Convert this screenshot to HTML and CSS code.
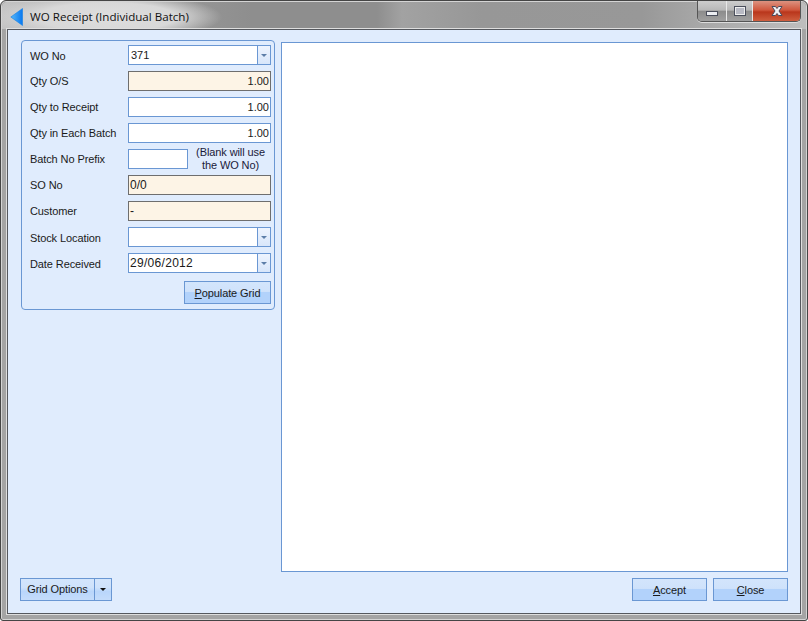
FILE: index.html
```html
<!DOCTYPE html>
<html lang="en">
<head>
<meta charset="utf-8">
<title>WO Receipt (Individual Batch)</title>
<link rel="stylesheet" href="styles.css">
</head>
<body>
<div class="window">
  <header class="titlebar">
    <svg class="app-icon" width="14" height="18" viewBox="0 0 14 18"><defs><linearGradient id="ai" x1="0" y1="0" x2="1" y2="0"><stop offset="0" stop-color="#58b8f8"/><stop offset="1" stop-color="#0878f0"/></linearGradient></defs><path d="M12.5 .5V17.5L.8 9Z" fill="url(#ai)" stroke="#1080e8" stroke-width=".6"/></svg>
    <span class="title">WO Receipt (Individual Batch)</span>
    <div class="controls">
      <div class="ctl ctl-min"><span class="min-glyph"></span></div>
      <div class="ctl ctl-max"><span class="max-glyph"></span></div>
      <div class="ctl ctl-close"><svg width="18" height="12" viewBox="0 0 18 12"><path d="M4 1.5H7.5L9 3.5L10.5 1.5H14L11 6L14 10.5H10.5L9 8.5L7.5 10.5H4L7 6Z" fill="#f0f0f4" stroke="#4a4a5a" stroke-width="1"/></svg></div>
    </div>
  </header>
  <main class="client">
    <div class="body">
      <section class="panel">
        <div class="row row-combo"><label class="lbl">WO No</label><div class="combo"><span class="combo-text num-text">371</span><span class="combo-btn"><i class="caret"></i></span></div></div>
        <div class="row"><label class="lbl">Qty O/S</label><div class="field ro num">1.00</div></div>
        <div class="row"><label class="lbl">Qty to Receipt</label><div class="field num">1.00</div></div>
        <div class="row"><label class="lbl">Qty in Each Batch</label><div class="field num">1.00</div></div>
        <div class="row"><label class="lbl">Batch No Prefix</label><div class="field short"></div><div class="hint">(Blank will use<br>the WO No)</div></div>
        <div class="row"><label class="lbl">SO No</label><div class="field ro text-ro">0/0</div></div>
        <div class="row"><label class="lbl">Customer</label><div class="field ro text-ro">-</div></div>
        <div class="row row-combo"><label class="lbl">Stock Location</label><div class="combo"><span class="combo-text"></span><span class="combo-btn"><i class="caret"></i></span></div></div>
        <div class="row row-combo"><label class="lbl">Date Received</label><div class="combo"><span class="combo-text date">29/06/2012</span><span class="combo-btn"><i class="caret"></i></span></div></div>
        <div class="panel-foot"><button class="btn btn-populate"><u>P</u>opulate Grid</button></div>
      </section>
      <section class="grid"></section>
    </div>
    <footer class="footer">
      <div class="split"><span class="split-main">Grid Options</span><span class="split-arrow"><i class="caret dark"></i></span></div>
      <div class="actions">
        <button class="btn btn-action"><u>A</u>ccept</button>
        <button class="btn btn-action"><u>C</u>lose</button>
      </div>
    </footer>
  </main>
</div>
</body>
</html>
```
FILE: styles.css
```css
* { box-sizing: border-box; }
html, body { margin: 0; padding: 0; }
body { width: 808px; height: 621px; overflow: hidden; background: #fff; font-family: "Liberation Sans", Arial, sans-serif; font-size: 11px; letter-spacing: -0.1px; color: #1a1a1a; }
.window { width: 808px; height: 621px; display: flex; flex-direction: column; padding: 0 6px 6px 6px; border: 1px solid #454545; border-radius: 6px 6px 3px 3px; background: #a4a4a4; box-shadow: inset 0 0 0 1px #d4d4d4; }
.titlebar { height: 27px; margin-top: 1px; flex: none; display: flex; align-items: center; margin-left: -5px; margin-right: -5px; padding-left: 8px; background: radial-gradient(ellipse 115px 24px at 105px 15px, #dedede 0, #d8d8d8 60%, rgba(200,200,200,0) 100%), linear-gradient(90deg, #c4c4c4 0, #9a9a9a 150px, #8e8e8e 250px, #8e8e8e 375px, #a2a2a2 400px, #979797 480px, #989898 640px, #a8a8a8 700px, #bdbdbd 800px); border-radius: 5px 5px 0 0; }
.app-icon { flex: none; margin-top: 2px; }
.title { margin-left: 6px; margin-top: 2px; font-family: "Open Sans", sans-serif; font-size: 11.6px; letter-spacing: 0; color: #111; white-space: nowrap; }
.controls { margin-left: auto; margin-right: 5px; margin-top: -1px; align-self: flex-start; display: flex; height: 21px; border: 1px solid #555; border-top: 0; border-radius: 0 0 5px 5px; overflow: hidden; box-shadow: 0 1px 0 #ddd; }
.ctl { height: 20px; display: flex; align-items: center; justify-content: center; background: linear-gradient(180deg, #cdcdcd 0, #b8b8b8 45%, #8c8c8c 52%, #a0a0a0 100%); border-right: 1px solid #e8e8e8; }
.ctl-min { width: 29px; }
.ctl-max { width: 26px; }
.ctl-close { width: 47px; border-right: 0; background: linear-gradient(180deg, #dc9280 0, #d0583e 45%, #b9361c 55%, #cf5f3f 100%); }
.min-glyph { width: 12px; height: 5px; margin-top: 5px; background: #eceef2; border: 1px solid #4b4f5c; }
.max-glyph { width: 12px; height: 10px; border: 1px solid #4b4f5c; background: #b8bac4; box-shadow: inset 0 0 0 1px #eee; }
.client { flex: 1; min-height: 0; display: flex; flex-direction: column; background: #e0ecfd; border: 1px solid #55585e; box-shadow: 0 0 0 1px #dedede; padding: 10px 12px 12px 12px; }
.body { flex: 1; min-height: 0; display: flex; gap: 6px; }
.panel { width: 254px; height: 270px; margin-left: 1px; flex: none; padding: 4px 3px 0 8px; border: 1px solid #6a97d3; border-radius: 4px; display: flex; flex-direction: column; gap: 6px; }
.row { height: 20px; flex: none; display: flex; align-items: center; }
.lbl { width: 98px; flex: none; white-space: nowrap; color: #1a1a1a; }
.row-combo .lbl { margin-top: 2px; }
.field { width: 143px; height: 20px; background: #fff; border: 1px solid #6a97d3; padding: 0 2px; line-height: 18px; white-space: nowrap; font-size: 12px; letter-spacing: 0; }
.num { text-align: right; font-size: 11px; padding-right: 1px; }
.ro { background: #fdf4e6; border-color: #6e6e6e; }
.text-ro { padding-left: 1px; }
.short { width: 60px; flex: none; }
.hint { width: 85px; flex: none; text-align: center; line-height: 13px; color: #1a1a3a; margin-top: -1px; }
.combo { width: 143px; height: 20px; display: flex; background: #fff; border: 1px solid #6a97d3; font-size: 12px; letter-spacing: 0; }
.combo-text { flex: 1; padding: 0 1px; line-height: 18px; }
.num-text { font-size: 11px; padding-left: 2px; }
.date { letter-spacing: 0.3px; }
.combo-btn { width: 13px; display: flex; align-items: center; justify-content: center; border-left: 1px solid #6a97d3; background: linear-gradient(180deg, #eef4fe, #d8e6fa); }
.caret { width: 0; height: 0; border-left: 3px solid transparent; border-right: 3px solid transparent; border-top: 3px solid #5d7ea8; }
.caret.dark { border-top-color: #111; }
.panel-foot { display: flex; justify-content: flex-end; margin-top: 2px; }
.btn { font: inherit; letter-spacing: inherit; color: #1a1a1a; height: 23px; padding: 0; border: 1px solid #6a97d3; background: linear-gradient(180deg, #d3e5fc 0, #cfe2fb 45%, #b2d2fb 50%, #b2d2fb 100%); }
.btn-populate { width: 87px; }
.btn-action { width: 75px; }
.grid { width: 507px; height: 530px; margin-top: 2px; flex: none; background: #fff; border: 1px solid #6a97d3; }
.footer { flex: none; height: 23px; display: flex; justify-content: space-between; }
.actions { display: flex; gap: 6px; }
.split { display: flex; width: 92px; height: 23px; border: 1px solid #6a97d3; background: linear-gradient(180deg, #d3e5fc 0, #cfe2fb 40%, #b9d6fb 60%, #c4dcfb 100%); }
.split-main { flex: 1; text-align: center; line-height: 21px; }
.split-arrow { width: 17px; display: flex; align-items: center; justify-content: center; border-left: 1px solid #6a97d3; }
```
